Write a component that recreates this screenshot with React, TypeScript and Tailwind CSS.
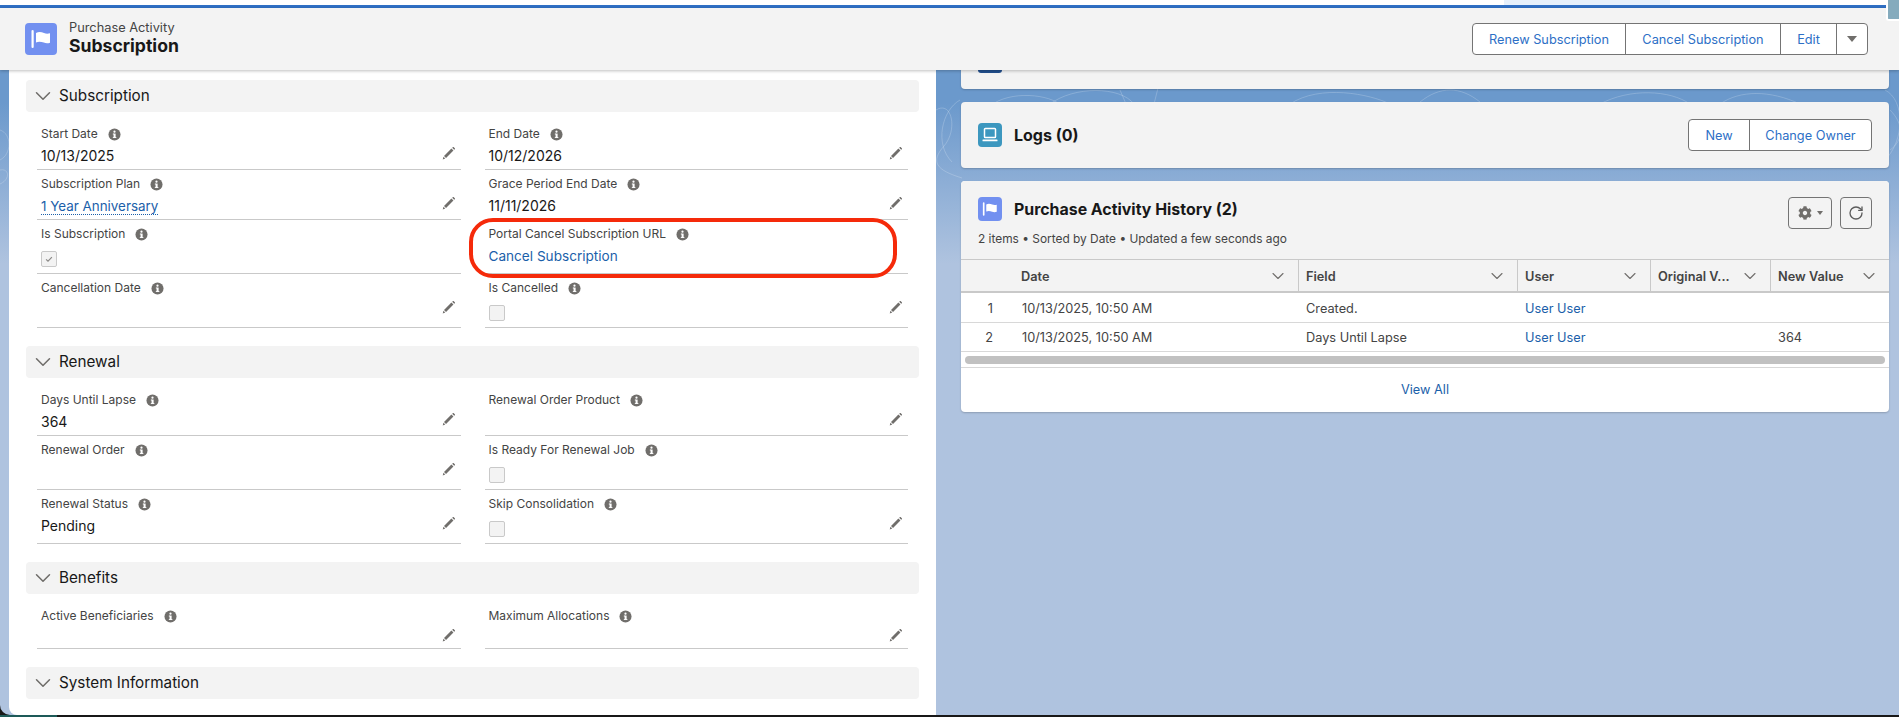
import { ReactNode } from "react";
import { ChevronDown, RotateCw } from "lucide-react";
import { FaCog } from "react-icons/fa";

function InfoIcon() {
  return (
    <svg viewBox="0 0 14 14" className="ml-[10px] h-[13px] w-[13px] shrink-0">
      <circle cx="7" cy="7" r="6.5" fill="#706e6b" />
      <rect x="6" y="6" width="2.2" height="4.6" fill="#fff" />
      <rect x="5.2" y="6" width="1.4" height="1" fill="#fff" />
      <rect x="5.2" y="9.8" width="3.8" height="1" fill="#fff" />
      <circle cx="7" cy="4" r="1.2" fill="#fff" />
    </svg>
  );
}

function PencilIcon() {
  return (
    <svg viewBox="0 0 14 14" className="h-[15px] w-[15px]">
      <path d="M9.7 2.4l1.9 1.9-6.9 6.9-1.9-1.9z" fill="#706e6b" />
      <path d="M10.4 1.7l.6-.6c.3-.3.7-.3 1 0l.9.9c.3.3.3.7 0 1l-.6.6z" fill="#706e6b" />
      <path d="M2.3 10l1.7 1.7-2.4.8z" fill="#706e6b" />
    </svg>
  );
}

function FlagIcon({ size }: { size: string }) {
  return (
    <div className={`flex shrink-0 items-center justify-center rounded-[4px] bg-[#7290f0] ${size}`}>
      <svg viewBox="0 0 32 32" className="h-full w-full">
        <rect x="6.5" y="7" width="2.2" height="18" rx="1.1" fill="#fff" />
        <path d="M11 10c3-1.6 5.6-.8 8 .1 1.900.7 3.700.9 6 .2v9.400c-2.300.8-4.300.6-6.200-.1-2.400-.9-5-1.500-7.800-.2z" fill="#fff" />
      </svg>
    </div>
  );
}

function LaptopIcon() {
  return (
    <div className="flex h-6 w-6 shrink-0 items-center justify-center rounded-[4px] bg-[#3c97bf]">
      <svg viewBox="0 0 24 24" className="h-full w-full">
        <rect x="6.5" y="5.500" width="11" height="9" rx="0.8" fill="none" stroke="#fff" strokeWidth="1.500" />
        <rect x="4.500" y="16.500" width="15" height="1.800" rx="0.6" fill="#fff" />
      </svg>
    </div>
  );
}

function Checkbox({ checked }: { checked?: boolean }) {
  return (
    <div className="mt-[9px] flex h-[16px] w-[16px] items-center justify-center rounded-[2px] border border-[#c9c9c9] bg-[#f3f3f3]">
      {checked && (
        <svg viewBox="0 0 12 12" className="h-[10px] w-[10px]">
          <path d="M2.500 6.500l2.300 2.200 4.700-5" fill="none" stroke="#8a8886" strokeWidth="1.400" />
        </svg>
      )}
    </div>
  );
}

type FieldProps = {
  label: string;
  value?: ReactNode;
  edit?: boolean;
  check?: "on" | "off";
  circled?: boolean;
};

function Field({ label, value, edit = true, check, circled }: FieldProps) {
  return (
    <div className="relative border-b border-[#c9c9c9] px-1 pt-[6px]">
      <div className="flex h-4 items-center text-[12px] leading-4 text-[#444444]">
        {label}
        <InfoIcon />
      </div>
      {value && <div className="mt-[4px] h-5 text-[14px] leading-5 text-[#181818]">{value}</div>}
      {check && <Checkbox checked={check === "on"} />}
      {edit && (
        <div className="absolute right-[5px] top-[26px]">
          <PencilIcon />
        </div>
      )}
      {circled && (
        <div className="pointer-events-none absolute left-[-16px] top-[-2px] h-[60px] w-[428px] rounded-[24px] border-[4.5px] border-[#f52a0a]" />
      )}
    </div>
  );
}

function SectionBar({ title, className = "" }: { title: string; className?: string }) {
  return (
    <div className={`mx-[17px] flex h-8 items-center rounded-[4px] bg-[#f3f3f3] pl-[4px] ${className}`}>
      <ChevronDown className="h-[26px] w-[26px] text-[#706e6b]" strokeWidth={1.400} />
      <span className="ml-[3px] pt-px text-[15.250px] text-[#181818]">{title}</span>
    </div>
  );
}

function ButtonGroup({
  labels,
  caret,
  className = "",
}: {
  labels: { text: string; w: string }[];
  caret?: boolean;
  className?: string;
}) {
  return (
    <div className={`flex h-8 rounded-[4px] border border-[#747474] bg-white ${className}`}>
      {labels.map((item, i) => (
        <div
          key={item.text}
          className={`flex items-center justify-center pt-px text-[12.750px] text-[#2d6fc6] ${item.w} ${i > 0 ? "border-l border-[#747474]" : ""}`}
        >
          {item.text}
        </div>
      ))}
      {caret && (
        <div className="flex w-[31px] items-center justify-center border-l border-[#747474]">
          <div className="h-0 w-0 border-x-[5px] border-t-[6px] border-x-transparent border-t-[#706e6b]" />
        </div>
      )}
    </div>
  );
}

const columns = "grid grid-cols-[53px_284px_219px_133px_120px_119px]";

function HeaderCell({ text, divider = true }: { text: string; divider?: boolean }) {
  return (
    <div className={`flex items-center justify-between pl-[7px] pr-[10px] ${divider ? "border-l border-[#c9c9c9]" : "pl-2"}`}>
      <span className="pt-[2px] text-[12.750px] font-semibold text-[#444444]">{text}</span>
      <ChevronDown className="h-[20px] w-[20px] text-[#706e6b]" strokeWidth={1.300} />
    </div>
  );
}

function HistoryRow({ n, field, value }: { n: number; field: string; value?: string }) {
  return (
    <div className={`${columns} h-[29.500px] items-center border-b border-[#d8d8d8] pt-[2px] text-[12.750px] text-[#444444]`}>
      <div className="pr-[21px] text-right">{n}</div>
      <div className="pl-2">10/13/2025, 10:50 AM</div>
      <div className="pl-2">{field}</div>
      <div className="pl-2 text-[#1b5faa]">User User</div>
      <div />
      <div className="pl-2">{value}</div>
    </div>
  );
}

export default function App() {
  return (
    <div className="relative flex h-[717px] w-[1899px] flex-col overflow-hidden bg-[#181818] font-[Inter,sans-serif]">
      <div className="flex h-[5px] bg-white">
        <div className="ml-[1504px] w-[166px] bg-[#e6f0fb]" />
      </div>
      <div className="h-[3px] bg-[#2f6fc4]" />

      {/* record header */}
      <div className="relative z-10 flex h-[62px] items-center justify-between bg-[#f3f3f3] pl-[25px] pr-[31px] shadow-[0_1px_3px_rgba(0,0,0,0.25)]">
        <div className="flex items-center">
          <FlagIcon size="h-8 w-8" />
          <div className="ml-3">
            <div className="text-[12.800px] leading-[14px] text-[#444444]">Purchase Activity</div>
            <div className="text-[17.600px] font-bold leading-[22px] text-[#181818]">Subscription</div>
          </div>
        </div>
        <ButtonGroup
          labels={[
            { text: "Renew Subscription", w: "w-[152px]" },
            { text: "Cancel Subscription", w: "w-[155px]" },
            { text: "Edit", w: "w-[56px]" },
          ]}
          caret
        />
      </div>
      <div className="absolute right-0 top-0 z-20 h-[21px] w-[13px] rounded-bl-[3px] border-b-2 border-l-2 border-white bg-[#85abbd]" />

      <div className="relative flex h-[645px] gap-[25px] overflow-hidden rounded-bl-[10px] bg-linear-to-b from-[#6b99cc] from-5% to-[#afc3df] to-30% pl-[9px] pr-[10px]">
        <svg viewBox="0 0 1899 170" className="absolute left-0 top-0 h-[170px] w-[1899px]" fill="none" stroke="#ffffff" strokeOpacity="0.2">
          <path d="M936 40c16-10 22 20 8 36s-8 24 18 32" />
          <path d="M960 30c-18 10-26 44-8 62" />
          <path d="M990 36c20-16 60-12 72 0 6 8-8 10-20 0" />
          <path d="M1050 34c24-18 70-18 84 0M1120 20l6 14M1158 18l-4 16" />
          <path d="M1290 34c30-20 80-10 100 0M1420 32c20-16 40-16 60 0M1600 34c30-16 70-14 90 0M1720 34c20-14 50-14 80 0" />
          <path d="M1885 20c20 10 20 50 0 70M1890 40c14 14 14 30 0 40" />
          <path d="M0 60c12 4 12 24 0 30M0 100c10-2 10 10 0 14" />
        </svg>

        {/* details panel */}
        <div className="relative w-[927px] rounded-bl-[8px] bg-white pt-[10px]">
          <SectionBar title="Subscription" />
          <div className="mx-[28px] mt-2 grid grid-cols-2 grid-rows-[50px_50px_54px_54px] gap-x-6">
            <Field label="Start Date" value="10/13/2025" />
            <Field label="End Date" value="10/12/2026" />
            <Field
              label="Subscription Plan"
              value={<span className="border-b border-dotted border-[#1b5faa] text-[13.400px] text-[#1b5faa]">1 Year Anniversary</span>}
            />
            <Field label="Grace Period End Date" value="11/11/2026" />
            <Field label="Is Subscription" edit={false} check="on" />
            <Field
              label="Portal Cancel Subscription URL"
              value={<span className="text-[13.600px] text-[#1b5faa]">Cancel Subscription</span>}
              edit={false}
              circled
            />
            <Field label="Cancellation Date" />
            <Field label="Is Cancelled" check="off" />
          </div>

          <SectionBar title="Renewal" className="mt-[18px]" />
          <div className="mx-[28px] mt-2 grid grid-cols-2 grid-rows-[50px_54px_54px] gap-x-6">
            <Field label="Days Until Lapse" value="364" />
            <Field label="Renewal Order Product" />
            <Field label="Renewal Order" />
            <Field label="Is Ready For Renewal Job" edit={false} check="off" />
            <Field label="Renewal Status" value="Pending" />
            <Field label="Skip Consolidation" check="off" />
          </div>

          <SectionBar title="Benefits" className="mt-[18px]" />
          <div className="mx-[28px] mt-2 grid grid-cols-2 grid-rows-[47px] gap-x-6">
            <Field label="Active Beneficiaries" />
            <Field label="Maximum Allocations" />
          </div>

          <SectionBar title="System Information" className="mt-[18px]" />
        </div>

        {/* related lists */}
        <div className="relative flex w-[928px] flex-col">
          <div className="h-[19px] overflow-hidden rounded-b-[4px] bg-[#f3f3f3] shadow-[0_1px_2px_rgba(0,0,0,0.2)]">
            <div className="ml-[17px] h-[3px] w-6 rounded-b-[3px] bg-[#22508f]" />
          </div>

          <div className="mt-[13px] flex h-[66px] items-center justify-between rounded-[4px] bg-[#f3f3f3] pl-[17px] pr-[17px] shadow-[0_1px_2px_rgba(0,0,0,0.2)]">
            <div className="flex items-center">
              <LaptopIcon />
              <span className="ml-3 text-[16px] font-bold text-[#181818]">Logs (0)</span>
            </div>
            <ButtonGroup
              labels={[
                { text: "New", w: "w-[60px]" },
                { text: "Change Owner", w: "w-[122px]" },
              ]}
            />
          </div>

          <div className="mt-[13px] overflow-hidden rounded-[4px] bg-white shadow-[0_1px_2px_rgba(0,0,0,0.2)]">
            <div className="flex h-[78px] justify-between bg-[#f3f3f3] pl-[17px] pr-[17px] pt-4">
              <div>
                <div className="flex items-center">
                  <FlagIcon size="h-6 w-6" />
                  <span className="ml-3 pt-px text-[15.900px] font-bold text-[#181818]">Purchase Activity History (2)</span>
                </div>
                <div className="mt-[8px] text-[11.900px] text-[#444444]">2 items • Sorted by Date • Updated a few seconds ago</div>
              </div>
              <div className="flex h-8 gap-2">
                <div className="flex w-[44px] items-center justify-center gap-[5px] rounded-[4px] border border-[#747474] bg-[#f3f3f3]">
                  <FaCog className="h-[14px] w-[14px] text-[#706e6b]" />
                  <div className="h-0 w-0 border-x-[3px] border-t-[4px] border-x-transparent border-t-[#706e6b]" />
                </div>
                <div className="flex w-8 items-center justify-center rounded-[4px] border border-[#747474] bg-[#f3f3f3]">
                  <RotateCw className="h-[16px] w-[16px] text-[#5c5c5c]" strokeWidth={2} />
                </div>
              </div>
            </div>

            <div className={`${columns} h-[34px] border-y border-[#c9c9c9] border-b-2 bg-[#f3f3f3]`}>
              <div />
              <HeaderCell text="Date" divider={false} />
              <HeaderCell text="Field" />
              <HeaderCell text="User" />
              <HeaderCell text="Original V..." />
              <HeaderCell text="New Value" />
            </div>
            <HistoryRow n={1} field="Created." />
            <HistoryRow n={2} field="Days Until Lapse" value="364" />

            <div className="flex h-[16px] items-center border-b border-[#d8d8d8] px-1">
              <div className="h-2 w-full rounded-full bg-[#c1c1c1]" />
            </div>
            <div className="flex h-[44px] items-center justify-center text-[12.750px] text-[#1b5faa]">View All</div>
          </div>
        </div>
      </div>

      <div className="h-[2px] bg-linear-to-r from-[#1d5a58] from-3% to-[#181818] to-3%" />
    </div>
  );
}
